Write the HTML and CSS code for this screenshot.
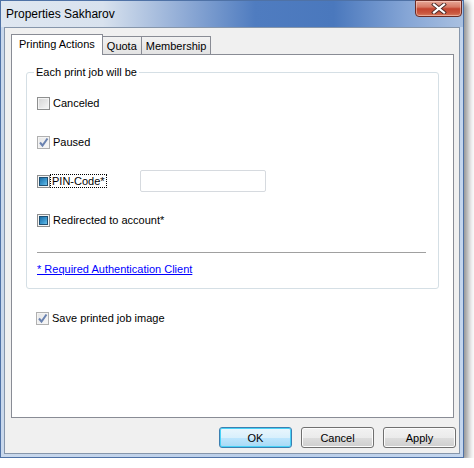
FILE: index.html
```html
<!DOCTYPE html>
<html lang="en">
  <head>
    <meta charset="utf-8" />
    <link rel="stylesheet" href="styles.css">
  </head>
  <body>
    <div class="window">
      <div class="titlebar">
        <span class="title">Properties Sakharov</span>
        <button class="closeBtn">
          <svg width="16" height="11" viewBox="0 0 16 11">
            <path d="M3 1.5 L13 9.5 M13 1.5 L3 9.5" stroke="#4a2a28" stroke-width="4" stroke-linecap="square" />
            <path d="M3 1.5 L13 9.5 M13 1.5 L3 9.5" stroke="#ffffff" stroke-width="2.2" stroke-linecap="square" />
          </svg>
        </button>
      </div>

      <div class="client">
        <div class="tabs">
          <div class="tab active">Printing Actions</div>
          <div class="tab">Quota</div>
          <div class="tab">Membership</div>
        </div>

        <div class="panel">
          <fieldset class="group">
            <legend>Each print job will be</legend>

            <div class="option">
              <span class="check"></span>
              <span>Canceled</span>
            </div>

            <div class="option">
              <span class="check checked">
                <svg width="11" height="11" viewBox="0 0 11 11">
                  <path d="M2 5.5 L4.5 8.5 L9.5 1.5" stroke="#6a82b0" stroke-width="2" fill="none" />
                </svg>
              </span>
              <span>Paused</span>
            </div>

            <div class="option pinRow">
              <span class="pinLabel">
                <span class="check mixed"></span>
                <span class="focused">PIN-Code*</span>
              </span>
              <input class="textbox" type="text" />
            </div>

            <div class="option">
              <span class="check mixed"></span>
              <span>Redirected to account*</span>
            </div>

            <div class="rule"></div>
            <a class="link" href="#">* Required Authentication Client</a>
          </fieldset>

          <div class="option saveRow">
            <span class="check checked">
              <svg width="11" height="11" viewBox="0 0 11 11">
                <path d="M2 5.5 L4.5 8.5 L9.5 1.5" stroke="#6a82b0" stroke-width="2" fill="none" />
              </svg>
            </span>
            <span>Save printed job image</span>
          </div>
        </div>

        <div class="buttons">
          <button class="btn default">OK</button>
          <button class="btn">Cancel</button>
          <button class="btn">Apply</button>
        </div>
      </div>
    </div>
  </body>
</html>
```

FILE: styles.css
```css
body {
  margin: 0;
  background-color: #ffffff;
  font-family: "Liberation Sans", Arial, sans-serif;
  font-size: 11px;
  color: #000000;
}

.window {
  box-sizing: border-box;
  width: 464px;
  height: 458px;
  display: flex;
  flex-direction: column;
  border: 1px solid #4f72a6;
  background: linear-gradient(to right, #c9d8ec, #b9cde8 60%, #c4d6ee);
  box-shadow: 3px 3px 7px 1px rgba(0, 0, 0, 0.45);
}

.titlebar {
  height: 26px;
  display: flex;
  align-items: flex-start;
  justify-content: space-between;
  background: linear-gradient(to right, #dfe7f1 0%, #d8e2ee 22%, #8eaad5 40%, #4f7cc0 55%, #4a78bd 72%, #86a6d6 88%, #a9c0e0 100%);
}

.title {
  font-size: 12px;
  padding: 6px 0 0 5px;
}

.closeBtn {
  width: 47px;
  height: 17px;
  margin: -1px 1px 0 0;
  padding: 0;
  display: flex;
  align-items: center;
  justify-content: center;
  border: 1px solid #6b2b24;
  border-radius: 0 0 4px 4px;
  background: linear-gradient(#e7a797 0%, #d77a66 40%, #c3442f 52%, #c9573f 80%, #d87c5f 100%);
  box-shadow: inset 0 0 0 1px rgba(255, 220, 210, 0.5);
}

.client {
  flex: 1;
  display: flex;
  flex-direction: column;
  margin: 0 3px 3px 3px;
  border: 1px solid #8696ab;
  background-color: #f0f0f0;
}

.tabs {
  height: 20px;
  padding: 6px 0 0 6px;
  display: flex;
  align-items: flex-end;
}

.tab {
  height: 17px;
  line-height: 19px;
  padding: 0 4px;
  border: 1px solid #898c95;
  border-bottom: none;
  margin-left: -1px;
  background: linear-gradient(#f2f2f2, #e3e3e3);
}

.tab.active {
  position: relative;
  height: 20px;
  line-height: 18px;
  padding: 0 7px;
  margin-left: 0;
  margin-bottom: -1px;
  background: #ffffff;
  z-index: 1;
}

.panel {
  flex: 1;
  margin: 0 5px 0 6px;
  padding: 0 14px;
  border: 1px solid #898c95;
  background-color: #ffffff;
}

.group {
  margin: 11px 0 0 0;
  padding: 17px 12px 13px 10px;
  border: 1px solid #d5dfe5;
  border-radius: 3px;
}

.group legend {
  padding: 0 2px;
  margin-left: -3px;
}

.option {
  height: 16px;
  display: flex;
  align-items: center;
  gap: 3px;
  margin-bottom: 23px;
}

.pinRow {
  height: 22px;
  margin-top: -3px;
  margin-bottom: 20px;
  gap: 0;
}

.pinLabel {
  width: 103px;
  display: flex;
  align-items: center;
  gap: 3px;
}

.focused {
  outline: 1px dotted #000000;
  outline-offset: 0;
  padding: 0 1px;
  margin-left: -2px;
}

.check {
  box-sizing: border-box;
  width: 13px;
  height: 13px;
  display: flex;
  align-items: center;
  justify-content: center;
  border: 1px solid #8e8f8f;
  background: linear-gradient(135deg, #d4d4d4, #f7f7f7);
  box-shadow: inset 0 0 0 1px #f4f4f4;
}

.check.checked {
  border-color: #b0b0b0;
  background: linear-gradient(135deg, #e6e6e6, #f8f8f8);
}

.check.mixed {
  background: #f4f4f4;
}

.check.mixed::after {
  content: "";
  width: 7px;
  height: 7px;
  border: 1px solid #1d4f73;
  background: linear-gradient(135deg, #1c6ea6, #3e9ad0 60%, #6cc0e8);
}

.textbox {
  box-sizing: border-box;
  width: 126px;
  height: 22px;
  margin: 0;
  border: 1px solid #d6dadf;
  border-radius: 2px;
  background-color: #ffffff;
}

.rule {
  height: 1px;
  margin-top: 24px;
  background-color: #a0a0a0;
}

.link {
  display: inline-block;
  margin-top: 10px;
  color: #0000ff;
  text-decoration: underline;
}

.saveRow {
  margin: 21px 0 0 10px;
}

.buttons {
  display: flex;
  justify-content: flex-end;
  gap: 9px;
  padding: 9px 3px 5px 0;
}

.btn {
  width: 73px;
  height: 21px;
  padding: 0;
  font-family: "Liberation Sans", Arial, sans-serif;
  font-size: 11px;
  color: #000000;
  border: 1px solid #707070;
  border-radius: 3px;
  background: linear-gradient(#f2f2f2 0%, #ebebeb 50%, #dddddd 51%, #cfcfcf 100%);
  box-shadow: inset 0 0 0 1px #fcfcfc;
}

.btn.default {
  border-color: #3c7fb1;
  background: linear-gradient(#eaf6fd 0%, #d9f0fc 50%, #bee6fd 51%, #a7d9f5 100%);
  box-shadow: inset 0 0 0 1px #48d2f7;
}
```
